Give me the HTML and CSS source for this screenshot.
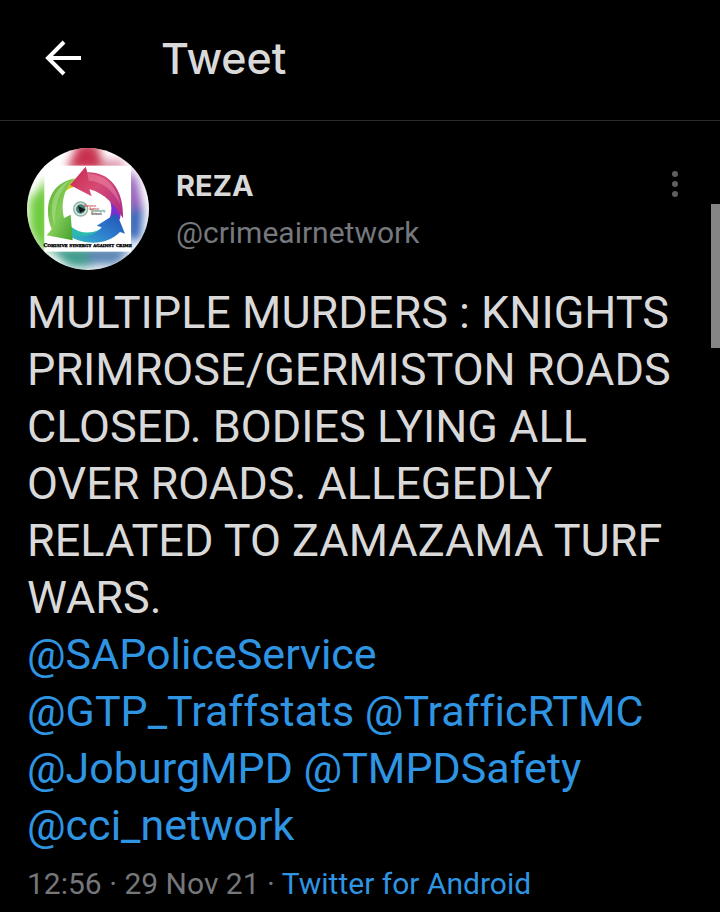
FILE: index.html
```html
<!DOCTYPE html>
<html lang="en">
<head>
    <meta charset="utf-8">
    <meta name="viewport" content="width=device-width, initial-scale=1">
    <title>Tweet</title>
    <link rel="stylesheet" href="styles.css">
</head>
<body>
    <header class="topbar">
        <button type="button" class="icon-button" aria-label="Back">
            <svg width="36" height="36" viewBox="0 0 36 36" fill="none" stroke="#fff" stroke-width="4">
                <path d="M36 18H3M19 2L3 18l16 16"/>
            </svg>
        </button>
        <h1 class="topbar-title">Tweet</h1>
    </header>

    <main class="tweet">
        <div class="author">
            <a href="#" class="avatar" aria-label="REZA">
                <svg viewBox="21 24 366 366">
                    <defs>
                        <filter id="soft" x="-80%" y="-80%" width="260%" height="260%">
                            <feGaussianBlur stdDeviation="14"/>
                        </filter>
                        <linearGradient id="pink" x1="0" y1="0" x2="1" y2="1">
                            <stop offset="0" stop-color="#c9284f"/>
                            <stop offset=".45" stop-color="#d64a74"/>
                            <stop offset="1" stop-color="#a82a8c"/>
                        </linearGradient>
                        <linearGradient id="green" x1="0" y1="0" x2="1" y2="1">
                            <stop offset="0" stop-color="#58a832"/>
                            <stop offset=".5" stop-color="#84cc58"/>
                            <stop offset="1" stop-color="#3d9c2c"/>
                        </linearGradient>
                        <linearGradient id="blue" x1="0" y1="1" x2="1" y2="0">
                            <stop offset="0" stop-color="#35bcc4"/>
                            <stop offset=".45" stop-color="#2f80d0"/>
                            <stop offset="1" stop-color="#1f4fb0"/>
                        </linearGradient>
                    </defs>
                    <rect x="21" y="24" width="366" height="366" fill="#fff"/>
                    <g filter="url(#soft)">
                        <path d="M175 10H230L255 90H140z" fill="#c8324f"/>
                        <path d="M250 60H310V95H250z" fill="#dd8fa8"/>
                        <path d="M90 110V330H62L28 270V180z" fill="#6fcb3c"/>
                        <path d="M320 90L348 110L368 205H320z" fill="#8b55b8"/>
                        <path d="M320 205H370L362 300H320z" fill="#3260b4"/>
                        <path d="M80 320H215V382H150z" fill="#3f9c8c"/>
                        <path d="M205 320H335L295 375H205z" fill="#5b86b4"/>
                    </g>
                    <rect x="73" y="77" width="260" height="258" fill="#fff"/>
                    <path d="M122 205C118 165 140 140 178 138L164 118C132 128 110 160 122 205z" fill="#d8c422"/>
                    <path d="M258 158C280 190 278 222 262 248L300 238C308 200 292 168 258 158z" fill="#7a2fd0"/>
                    <path d="M150 258C176 280 210 284 240 268L250 298C212 312 176 306 152 290z" fill="#2cb8ae"/>
                    <path d="M150 135L197 80L202 97C266 96 312 144 309 235C284 196 256 160 208 148L215 169z" fill="url(#pink)"/>
                    <path d="M166 115C138 138 120 180 132 234L152 224L158 301L80 286L95 268C66 192 96 126 166 115z" fill="url(#green)"/>
                    <path d="M290 220L230 257L245 262C228 284 196 296 152 286C194 318 262 316 300 276L315 281z" fill="url(#blue)"/>
                    <path d="M202 100C256 104 288 134 302 196C278 146 244 124 206 122z" fill="#f7a1b8" opacity=".4"/>
                    <path d="M150 122C96 146 86 200 104 256C106 200 112 158 150 122z" fill="#c4efa0" opacity=".4"/>
                    <circle cx="182" cy="207" r="21" fill="#d8e4dc" stroke="#8fb5a8" stroke-width="4"/>
                    <circle cx="182" cy="207" r="14" fill="#3f8474"/>
                    <path d="M174 197L197 209L180 219z" fill="#151515"/>
                    <g class="logo-words">
                        <text x="193" y="202" fill="#d23b45">Business</text>
                        <text x="208" y="209" fill="#c4434d">Against</text>
                        <text x="212" y="217" fill="#3a8564">Community</text>
                        <text x="214" y="225" fill="#333">Network</text>
                    </g>
                    <text x="203" y="322" class="logo-motto">Cohisive synergy against crime</text>
                </svg>
            </a>
            <div class="author-names">
                <a href="#" class="author-name">REZA</a>
                <a href="#" class="author-handle">@crimeairnetwork</a>
            </div>
            <button type="button" class="icon-button more" aria-label="More">
                <svg width="8" height="28" viewBox="0 0 8 28" fill="#5d5f62">
                    <circle cx="4" cy="4" r="3"/>
                    <circle cx="4" cy="14" r="3"/>
                    <circle cx="4" cy="24" r="3"/>
                </svg>
            </button>
        </div>

        <p class="tweet-text">
            MULTIPLE MURDERS : KNIGHTS PRIMROSE/GERMISTON ROADS CLOSED. BODIES LYING ALL OVER ROADS. ALLEGEDLY RELATED TO ZAMAZAMA TURF WARS.
        </p>
        <p class="tweet-text mentions">
            <a href="#">@SAPoliceService</a> <a href="#">@GTP_Traffstats</a> <a href="#">@TrafficRTMC</a> <a href="#">@JoburgMPD</a> <a href="#">@TMPDSafety</a> <a href="#">@cci_network</a>
        </p>

        <p class="tweet-meta">12:56 · 29 Nov 21 · <a href="#">Twitter for Android</a></p>
    </main>

    <div class="scroll-thumb"></div>
</body>
</html>
```

FILE: styles.css
```css
* {
    box-sizing: border-box;
}

body {
    margin: 0;
    background-color: #000;
    color: #d9d9d9;
    font-family: Roboto, "Liberation Sans", sans-serif;
    font-variant-ligatures: none;
}

a {
    color: #2f95e3;
    text-decoration: none;
}

.icon-button {
    display: flex;
    padding: 0;
    border: none;
    background: none;
    cursor: pointer;
}

/* top bar */
.topbar {
    display: flex;
    align-items: center;
    gap: 80px;
    height: 121px;
    padding: 0 45px 5px;
    border-bottom: 1px solid #2b2c2e;
}

.topbar-title {
    margin: 0;
    font-family: Inter, sans-serif;
    font-size: 43px;
    font-weight: 500;
    line-height: 52px;
}

/* tweet */
.tweet {
    padding: 27px 27px 0;
}

.author {
    display: flex;
    align-items: flex-start;
    gap: 27px;
}

.avatar {
    flex: none;
    width: 122px;
    height: 122px;
    border-radius: 50%;
    overflow: hidden;
}

.avatar svg {
    display: block;
}

.logo-words {
    font-family: "Liberation Sans", sans-serif;
    font-size: 8px;
    font-weight: bold;
}

.logo-motto {
    font-family: "DejaVu Serif", serif;
    font-size: 15px;
    font-weight: bold;
    font-variant: small-caps;
    text-anchor: middle;
    fill: #000;
    stroke: #000;
    stroke-width: 1px;
}

.author-names {
    display: flex;
    flex: 1;
    flex-direction: column;
    padding-top: 14px;
}

.author-name {
    color: #d9d9d9;
    font-family: Inter, sans-serif;
    font-size: 29px;
    font-weight: 700;
    line-height: 48px;
}

.author-handle {
    color: #75787d;
    font-size: 30px;
    line-height: 46px;
}

.more {
    margin-top: 22px;
    margin-right: 14px;
}

.tweet-text {
    margin: 14px 0 0;
    font-size: 45px;
    line-height: 57px;
}

.mentions {
    margin-top: 0;
    font-size: 43px;
}

.tweet-meta {
    margin: 10px 0 0;
    color: #75777b;
    font-size: 30px;
    line-height: 40px;
}

/* scroll indicator, lies over the page */
.scroll-thumb {
    position: fixed;
    top: 204px;
    right: 0;
    width: 9px;
    height: 144px;
    background-color: #858585;
}
```
